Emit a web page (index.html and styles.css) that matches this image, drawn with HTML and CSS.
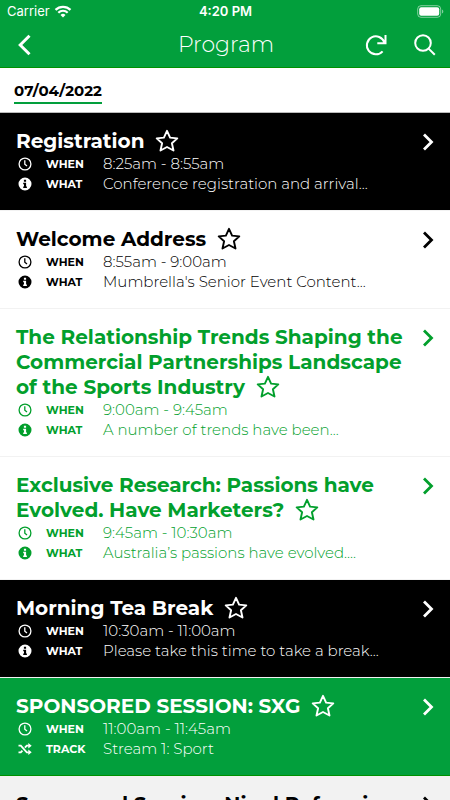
FILE: index.html
```html
<!DOCTYPE html>
<html lang="en">
<head>
<meta charset="utf-8">
<meta name="viewport" content="width=device-width, initial-scale=1">
<title>Program</title>
<link rel="stylesheet" href="styles.css">
</head>
<body>
<svg class="sprite" aria-hidden="true">
  <symbol id="star" viewBox="0 0 24 24"><path d="M12 1.800l3.100 6.800 7.200.8-5.400 4.900 1.600 7.200L12 18l-6.500 3.500 1.600-7.200L1.700 9.400l7.200-.8z" fill="none" stroke="currentColor" stroke-width="1.900" stroke-linejoin="round"/></symbol>
  <symbol id="clock" viewBox="0 0 14 14"><circle cx="7" cy="7" r="5.900" fill="none" stroke="currentColor" stroke-width="1.300"/><path d="M6.800 3.300v3.900l2.200 1.900" fill="none" stroke="currentColor" stroke-width="1.300"/></symbol>
  <symbol id="info" viewBox="0 0 14 14"><path fill-rule="evenodd" fill="currentColor" d="M7 .5a6.500 6.500 0 1 0 0 13 6.500 6.500 0 0 0 0-13zM5.900 2.800h2.200v2H5.900zM5.200 5.800h2.900v3.700h.8v1.400H5.200V9.500h.8V7.200h-.8z"/></symbol>
  <symbol id="shuffle" viewBox="0 0 14 14"><path d="M.5 3.700h2.300L8.800 10.300h2M.5 10.300h2.300l1.600-1.700M6.900 5.700l1.900-2h2" fill="none" stroke="currentColor" stroke-width="1.800"/><path fill="currentColor" d="M10.300 1l3.400 2.700-3.400 2.700zM10.300 7.600l3.400 2.700-3.400 2.700z"/></symbol>
  <symbol id="next" viewBox="0 0 12 18"><path d="M2 1.500L9.500 9 2 16.500" fill="none" stroke="currentColor" stroke-width="2.800"/></symbol>
</svg>
<header class="top">
  <div class="status">
    <span class="carrier">Carrier
      <svg width="18" height="13" viewBox="0 0 18 13" fill="none" stroke="currentColor" stroke-width="2.200"><path d="M1.500 4.900a10.600 10.600 0 0 1 15 0M4.300 7.700a6.600 6.600 0 0 1 9.400 0"/><path d="M9 12.500L6.500 9.900a3.600 3.600 0 0 1 5 0z" fill="currentColor" stroke="none"/></svg>
    </span>
    <span class="time">4:20 PM</span>
    <svg class="battery" width="27" height="13" viewBox="0 0 27 13"><rect x=".7" y=".7" width="23" height="11.600" rx="3.300" fill="none" stroke="#fff" stroke-opacity=".5"/><rect x="2.200" y="2.200" width="20" height="8.600" rx="2" fill="#fff"/><path d="M25 4.500c1.800.8 1.800 3.200 0 4z" fill="#fff" fill-opacity=".5"/></svg>
  </div>
  <nav class="bar">
    <button class="icon-btn" aria-label="Back"><svg width="16" height="22" viewBox="0 0 16 22"><path d="M13.500 1.700L4.200 11l9.300 9.300" fill="none" stroke="currentColor" stroke-width="3"/></svg></button>
    <h1>Program</h1>
    <div class="actions">
      <button class="icon-btn" aria-label="Refresh"><svg width="22" height="22" viewBox="0 0 22 22" fill="none" stroke="currentColor" stroke-width="2"><path d="M17.600 17.300A9 9 0 1 1 19.400 8.500M20.500 1v8.300h-8.200"/></svg></button>
      <button class="icon-btn" aria-label="Search"><svg width="22" height="22" viewBox="0 0 22 22" fill="none" stroke="currentColor" stroke-width="2"><circle cx="9" cy="9" r="7.800"/><path d="M14.600 14.600l6.200 6.200"/></svg></button>
    </div>
  </nav>
</header>
<div class="dates"><button class="date">07/04/2022</button></div>
<main>
  <article class="item black">
    <div class="body">
      <h2>Registration <button class="fav" aria-label="Favourite"><svg><use href="#star"/></svg></button></h2>
      <dl>
        <div><dt><svg><use href="#clock"/></svg>WHEN</dt><dd>8:25am - 8:55am</dd></div>
        <div><dt><svg><use href="#info"/></svg>WHAT</dt><dd>Conference registration and arrival...</dd></div>
      </dl>
    </div>
    <svg class="next"><use href="#next"/></svg>
  </article>
  <article class="item">
    <div class="body">
      <h2>Welcome Address <button class="fav" aria-label="Favourite"><svg><use href="#star"/></svg></button></h2>
      <dl>
        <div><dt><svg><use href="#clock"/></svg>WHEN</dt><dd>8:55am - 9:00am</dd></div>
        <div><dt><svg><use href="#info"/></svg>WHAT</dt><dd>Mumbrella's Senior Event Content...</dd></div>
      </dl>
    </div>
    <svg class="next"><use href="#next"/></svg>
  </article>
  <article class="item accent">
    <div class="body">
      <h2>The Relationship Trends Shaping the Commercial Partnerships Landscape of the Sports Industry <button class="fav" aria-label="Favourite"><svg><use href="#star"/></svg></button></h2>
      <dl>
        <div><dt><svg><use href="#clock"/></svg>WHEN</dt><dd>9:00am - 9:45am</dd></div>
        <div><dt><svg><use href="#info"/></svg>WHAT</dt><dd>A number of trends have been...</dd></div>
      </dl>
    </div>
    <svg class="next"><use href="#next"/></svg>
  </article>
  <article class="item accent">
    <div class="body">
      <h2>Exclusive Research: Passions have Evolved. Have Marketers? <button class="fav" aria-label="Favourite"><svg><use href="#star"/></svg></button></h2>
      <dl>
        <div><dt><svg><use href="#clock"/></svg>WHEN</dt><dd>9:45am - 10:30am</dd></div>
        <div><dt><svg><use href="#info"/></svg>WHAT</dt><dd>Australia’s passions have evolved....</dd></div>
      </dl>
    </div>
    <svg class="next"><use href="#next"/></svg>
  </article>
  <article class="item black">
    <div class="body">
      <h2>Morning Tea Break <button class="fav" aria-label="Favourite"><svg><use href="#star"/></svg></button></h2>
      <dl>
        <div><dt><svg><use href="#clock"/></svg>WHEN</dt><dd>10:30am - 11:00am</dd></div>
        <div><dt><svg><use href="#info"/></svg>WHAT</dt><dd>Please take this time to take a break...</dd></div>
      </dl>
    </div>
    <svg class="next"><use href="#next"/></svg>
  </article>
  <article class="item green">
    <div class="body">
      <h2>SPONSORED SESSION: SXG <button class="fav" aria-label="Favourite"><svg><use href="#star"/></svg></button></h2>
      <dl>
        <div><dt><svg><use href="#clock"/></svg>WHEN</dt><dd>11:00am - 11:45am</dd></div>
        <div><dt><svg><use href="#shuffle"/></svg>TRACK</dt><dd>Stream 1: Sport</dd></div>
      </dl>
    </div>
    <svg class="next"><use href="#next"/></svg>
  </article>
  <article class="item grey">
    <div class="body"><h2>Sponsored Session: Nigel Reforming</h2></div>
    <svg class="next"><use href="#next"/></svg>
  </article>
</main>
</body>
</html>
```
FILE: styles.css
```css
* { box-sizing: border-box; }
html { height: 100%; overflow: hidden; }
body {
  margin: 0;
  height: 100%;
  overflow: hidden;
  background: #fff;
  color: #000;
  font-family: Montserrat, Inter, "Open Sans", sans-serif;
}
button { padding: 0; border: 0; background: none; color: inherit; font: inherit; }
.sprite { position: absolute; width: 0; height: 0; }
.top { background: #029f3c; color: #fff; border-bottom: 1px solid #009100; }
.status {
  display: grid;
  grid-template-columns: 1fr auto 1fr;
  align-items: center;
  height: 22px;
  padding: 0 6px 0 7px;
  font: 13px/22px Inter, sans-serif;
}
.carrier { display: flex; align-items: center; gap: 4px; }
.time { font-weight: 600; }
.battery { justify-self: end; }
.bar {
  display: grid;
  grid-template-columns: 1fr auto 1fr;
  align-items: center;
  height: 45px;
  padding: 0 14px 0 16px;
}
.icon-btn, .icon-btn svg { display: block; }
.actions { display: flex; justify-content: flex-end; gap: 27px; }
h1 { margin: 0; font-size: 22px; font-weight: 300; }
.dates { display: flex; padding: 12px 14px 8px; border-bottom: 1px solid #bbb; }
.date {
  height: 24px;
  border-bottom: 2px solid #029f3c;
  font-size: 15px;
  font-weight: 700;
  line-height: 20px;
}
.item {
  display: flex;
  padding: 16px;
  border-bottom: 1px solid #f2f2f2;
}
.body { flex: 1; min-width: 0; }
.black { background: #000; color: #fff; }
.accent { color: #029f2c; }
.green { background: #029f3c; color: #fff; border-bottom-color: #009100; }
.grey { background: #f2f2f2; }
h2 { margin: 0; font-size: 20px; font-weight: 700; line-height: 25px; }
.fav { display: inline-block; width: 24px; height: 24px; margin-left: 5px; vertical-align: top; }
.fav svg { display: block; width: 24px; height: 24px; }
.next { flex: none; width: 12px; height: 18px; margin-top: 4px; }
dl { margin: 0; }
dl div { display: flex; height: 20px; align-items: center; }
dt { display: flex; align-items: center; gap: 14px; width: 87px; font-size: 11px; font-weight: 700; }
dt svg { width: 14px; height: 14px; margin-left: 2px; }
dd { margin: 0; font-size: 15px; font-weight: 300; line-height: 20px; white-space: nowrap; }
```
